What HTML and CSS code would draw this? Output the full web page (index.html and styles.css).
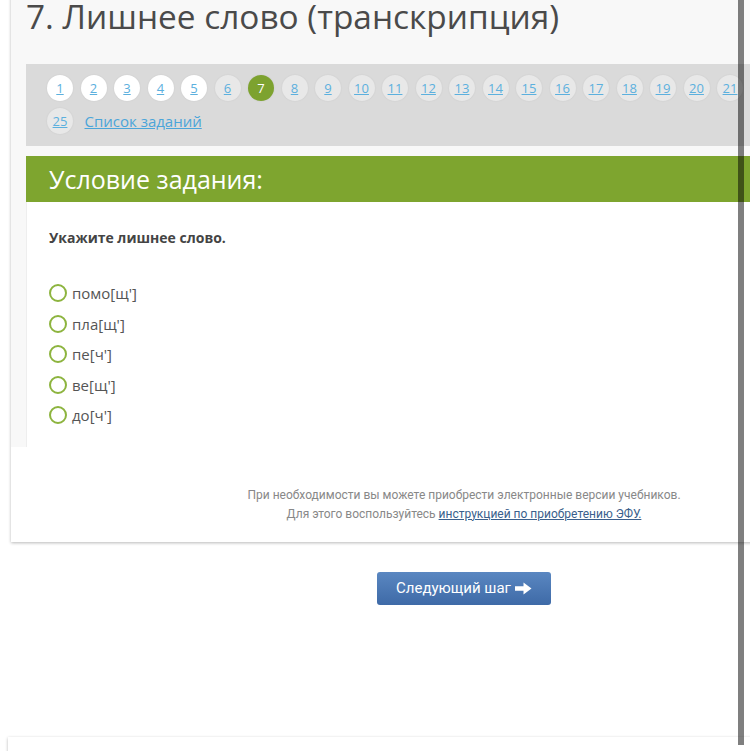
FILE: index.html
```html
<!DOCTYPE html>
<html lang="ru">

<head>
  <meta charset="UTF-8" />
  <meta name="viewport" content="width=device-width, initial-scale=1" />
  <title>Лишнее слово</title>
  <link rel="stylesheet" href="styles.css">
</head>

<body>
  <div class="page">
    <div class="card">
      <div class="card-top">
        <h1 class="task-title">7. Лишнее слово (транскрипция)</h1>

        <div class="steps">
          <a class="step done" href="#">1</a>
          <a class="step done" href="#">2</a>
          <a class="step done" href="#">3</a>
          <a class="step done" href="#">4</a>
          <a class="step done" href="#">5</a>
          <a class="step" href="#">6</a>
          <a class="step active" href="#">7</a>
          <a class="step" href="#">8</a>
          <a class="step" href="#">9</a>
          <a class="step" href="#">10</a>
          <a class="step" href="#">11</a>
          <a class="step" href="#">12</a>
          <a class="step" href="#">13</a>
          <a class="step" href="#">14</a>
          <a class="step" href="#">15</a>
          <a class="step" href="#">16</a>
          <a class="step" href="#">17</a>
          <a class="step" href="#">18</a>
          <a class="step" href="#">19</a>
          <a class="step" href="#">20</a>
          <a class="step" href="#">21</a>
          <a class="step" href="#">22</a>
          <a class="step" href="#">23</a>
          <a class="step" href="#">24</a>
          <a class="step" href="#">25</a>
          <a class="task-list" href="#">Список заданий</a>
        </div>

        <div class="task">
          <div class="task-head">Условие задания:</div>
          <div class="task-body">
            <p class="question">Укажите лишнее слово.</p>
            <ul class="options">
              <li><span class="radio"></span>помо[щ']</li>
              <li><span class="radio"></span>пла[щ']</li>
              <li><span class="radio"></span>пе[ч']</li>
              <li><span class="radio"></span>ве[щ']</li>
              <li><span class="radio"></span>до[ч']</li>
            </ul>
          </div>
        </div>
      </div>

      <!-- note about electronic textbooks -->
      <div class="card-foot">
        При необходимости вы можете приобрести электронные версии учебников.<br>
        Для этого воспользуйтесь <a href="#">инструкцией по приобретению ЭФУ.</a>
      </div>
    </div>

    <div class="actions">
      <button class="next-btn">Следующий шаг
        <svg width="17" height="13" viewBox="0 0 17 13">
          <path d="M0 4.2h8.5V0.5L16.5 6.5l-8 6V8.8H0z" fill="#fff" />
        </svg>
      </button>
    </div>

    <div class="card next-card"></div>
  </div>

  <div class="scroll-bar"></div>
</body>

</html>
```

FILE: styles.css
```css
body {
  margin: 0;
  background: #fff;
  font-family: "Open Sans", Arial, sans-serif;
  color: #444;
  overflow: hidden;
  height: 751px;
}

.page {
  width: 906px;
  margin-left: 11px;
}

.card {
  background: #fff;
  box-shadow: 0 1px 3px rgba(0, 0, 0, 0.28);
}

.card-top {
  background: #f8f8f8;
  padding: 0 0 0 15px;
}

.task-title {
  margin: -4px 0 0 0;
  font-size: 33.4px;
  line-height: 40px;
  font-weight: 400;
  color: #4a4a4a;
}

/* steps navigation */
.steps {
  margin-top: 28px;
  background: #dadada;
  padding: 11px 61px 12px 21px;
  display: flex;
  flex-wrap: wrap;
  gap: 7px 7.5px;
  align-items: center;
}

.step {
  width: 26px;
  height: 26px;
  border-radius: 50%;
  background: #e8e8e8;
  box-shadow: 0 0 2px rgba(0, 0, 0, 0.08);
  display: flex;
  align-items: center;
  justify-content: center;
  font-size: 13px;
  color: #5cb0de;
  text-decoration: underline;
}

.step.done {
  background: #fff;
}

.step.active {
  background: #7da22f;
  color: #fff;
  text-decoration: none;
}

.task-list {
  margin-left: 4px;
  font-size: 15px;
  color: #4ba5d9;
  text-decoration: underline;
}

/* task panel */
.task {
  margin-top: 10px;
  background: #fff;
}

.task-head {
  background: #7ea52f;
  color: #fff;
  font-size: 25px;
  height: 46px;
  line-height: 46px;
  padding-left: 23px;
}

.task-body {
  padding: 26px 23px 16px 22px;
  border-left: 1px solid #eee;
}

.question {
  margin: 0;
  font-size: 14px;
  font-weight: 700;
  line-height: 20px;
  color: #444;
}

.options {
  list-style: none;
  margin: 30px 0 0 0;
  padding: 0;
}

.options li {
  display: flex;
  align-items: center;
  height: 30.5px;
  font-size: 15px;
  color: #555;
}

.radio {
  width: 14px;
  height: 14px;
  border: 2px solid #8db43f;
  border-radius: 50%;
  margin-right: 5px;
}

.card-foot {
  padding: 39px 0 18px 0;
  text-align: center;
  font-family: Roboto, Arial, sans-serif;
  font-size: 12px;
  line-height: 19px;
  color: #888;
}

.card-foot a {
  color: #3a5f8c;
  text-decoration: underline;
}

.actions {
  padding-top: 30px;
  text-align: center;
}

.next-btn {
  width: 174px;
  height: 33px;
  border: none;
  border-radius: 3px;
  background: linear-gradient(#5a87c1, #3e6aa7);
  color: #fff;
  font-family: Roboto, Arial, sans-serif;
  font-size: 15px;
  cursor: pointer;
  display: inline-flex;
  align-items: center;
  justify-content: center;
  gap: 4px;
}

.next-card {
  margin-top: 132px;
  margin-left: -3px;
  height: 40px;
}

.scroll-bar {
  position: fixed;
  top: 0;
  left: 738px;
  width: 6px;
  height: 745px;
  background: rgba(0, 0, 0, 0.5);
}
```
